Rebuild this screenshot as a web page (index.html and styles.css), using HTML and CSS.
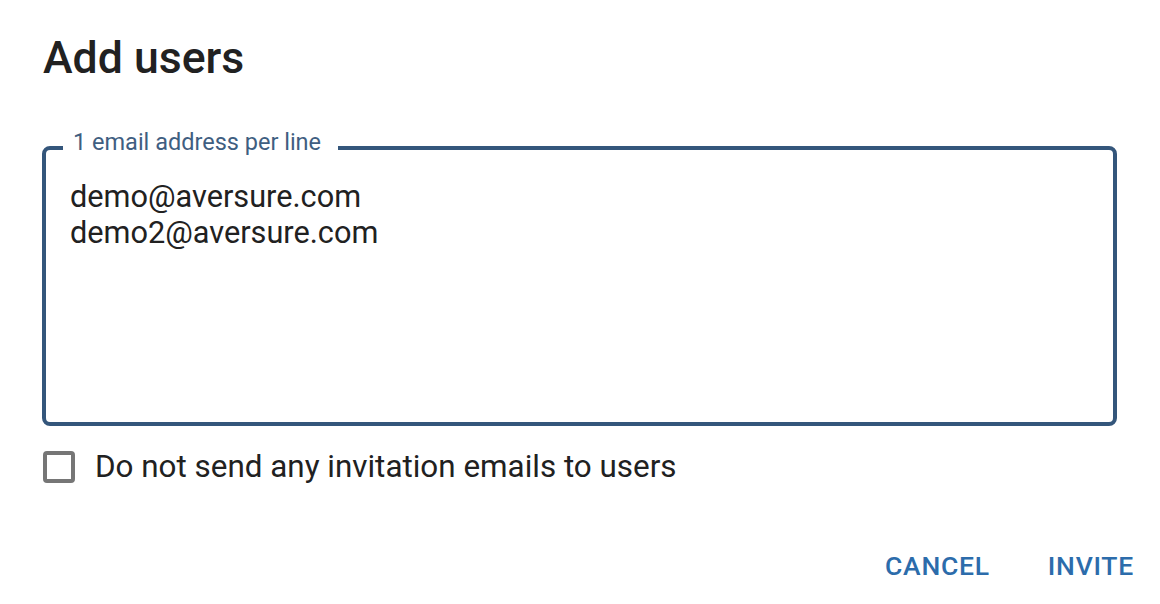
FILE: index.html
```html
<!DOCTYPE html>
<html lang="en">
<head>
<meta charset="utf-8">
<title>Add users</title>
<link rel="stylesheet" href="styles.css">
</head>
<body>
<div class="dialog">
  <div class="content">
    <h2 class="title">Add users</h2>
    <div class="outlined">
      <span class="outlined-label">1 email address per line</span>
      <div class="textarea">demo@aversure.com<br>demo2@aversure.com</div>
    </div>
    <label class="check-row">
      <span class="checkbox"></span>
      <span class="check-text">Do not send any invitation emails to users</span>
    </label>
  </div>
  <div class="actions">
    <button class="btn">CANCEL</button>
    <button class="btn">INVITE</button>
  </div>
</div>
</body>
</html>
```
FILE: styles.css
```css
html, body {
  margin: 0;
  padding: 0;
  background: #ffffff;
}
body {
  font-family: Roboto, "Liberation Sans", Arial, sans-serif;
  color: #212121;
}
.dialog {
  width: 1160px;
  height: 604px;
  overflow: hidden;
}
.content {
  padding: 32px 43px 0 42px;
}
.title {
  margin: 0 0 0 1px;
  font-size: 44.6px;
  font-weight: 500;
  line-height: 52.8px;
  color: #212121;
}
.outlined {
  position: relative;
  margin-top: 61px;
  height: 280px;
  box-sizing: border-box;
  border: 4px solid #34567b;
  border-radius: 8px;
}
.outlined-label {
  position: absolute;
  left: 17px;
  top: -19px;
  padding: 0 17px 0 10px;
  background: #ffffff;
  font-size: 23.5px;
  line-height: 22px;
  color: #3f5e81;
  white-space: nowrap;
}
.textarea {
  padding: 29px 24px 0 24px;
  font-size: 30.7px;
  line-height: 36px;
  color: #212121;
}
.check-row {
  display: flex;
  align-items: center;
  height: 64px;
  margin-top: 9px;
}
.checkbox {
  width: 32px;
  height: 32px;
  box-sizing: border-box;
  border: 4px solid #767676;
  border-radius: 4px;
  margin-left: 1px;
  flex: none;
}
.check-text {
  margin-left: 20px;
  font-size: 31.4px;
  line-height: 36px;
  color: #212121;
}
.actions {
  display: flex;
  justify-content: flex-end;
  gap: 30px;
  padding-right: 12px;
  margin-top: 49px;
}
.btn {
  border: none;
  background: transparent;
  padding: 0 14px;
  font-family: Roboto, "Liberation Sans", Arial, sans-serif;
  font-size: 26.5px;
  font-weight: 500;
  line-height: 36px;
  letter-spacing: 0.75px;
  color: #2c6cab;
  cursor: pointer;
}
```
